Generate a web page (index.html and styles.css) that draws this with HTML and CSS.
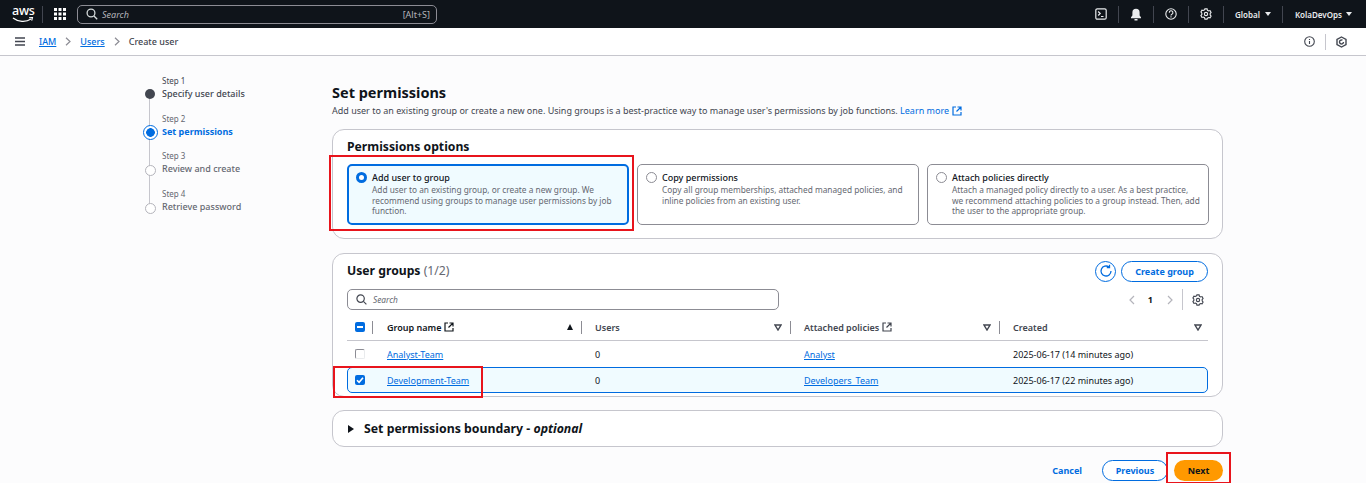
FILE: index.html
```html
<!DOCTYPE html>
<html lang="en">
<head>
    <meta charset="UTF-8">
    <title>Create user - IAM</title>
    <link rel="stylesheet" href="styles.css">
</head>
<body>
    <header class="topbar">
        <div class="logo">
            <span class="logo-text">aws</span>
            <svg class="logo-smile" width="22" height="6" viewBox="0 0 22 6"><path d="M1 1c5 4 13 4.500 18 1" fill="none" stroke="#fff" stroke-width="1.300"/><path d="M17 .8l3.500-.3-.8 3.200" fill="none" stroke="#fff" stroke-width="1.100"/></svg>
        </div>
        <span class="top-sep"></span>
        <svg class="grid-icon" width="12" height="12" viewBox="0 0 12 12" fill="#fff"><rect width="3" height="3"/><rect x="4.500" width="3" height="3"/><rect x="9" width="3" height="3"/><rect y="4.500" width="3" height="3"/><rect x="4.500" y="4.500" width="3" height="3"/><rect x="9" y="4.500" width="3" height="3"/><rect y="9" width="3" height="3"/><rect x="4.500" y="9" width="3" height="3"/><rect x="9" y="9" width="3" height="3"/></svg>
        <div class="top-search">
            <svg width="12" height="12" viewBox="0 0 12 12" fill="none" stroke="#d5dbdb" stroke-width="1.300"><circle cx="5" cy="5" r="3.900"/><path d="M8 8l3.200 3.200"/></svg>
            <span class="top-search-text">Search</span>
            <span class="top-search-key">[Alt+S]</span>
        </div>
        <div class="top-actions">
            <svg class="top-icon" width="12" height="12" viewBox="0 0 12 12" fill="none" stroke="#e9ebed" stroke-width="1.200"><rect x=".8" y=".8" width="10.400" height="10.400" rx="1.500"/><path d="M3.200 3.500l2 2-2 2M6 8.500h2.500"/></svg>
            <span class="top-sep"></span>
            <svg class="top-icon" width="12" height="13" viewBox="0 0 12 13" fill="#e9ebed"><path d="M6 .8a3.600 3.600 0 0 0-3.600 3.600v3L1 9.200v1h10v-1L9.600 7.400v-3A3.600 3.600 0 0 0 6 .8z"/><rect x="4.500" y="11" width="3" height="1.500"/></svg>
            <span class="top-sep"></span>
            <svg class="top-icon" width="12" height="12" viewBox="0 0 12 12" fill="none" stroke="#e9ebed" stroke-width="1.100"><circle cx="6" cy="6" r="5.200"/><path d="M4.300 4.700a1.800 1.800 0 1 1 2.600 1.500c-.6.300-.9.700-.9 1.300M6 8.300v1.100"/></svg>
            <span class="top-sep"></span>
            <svg class="top-icon" width="12" height="12" viewBox="0 0 13 13" fill="none" stroke="#e9ebed" stroke-width="1.200"><path d="M5.300 1h2.400l.4 1.500 1.300.7 1.500-.4 1.100 2-1 1.200v1.500l1 1.200-1.100 2-1.500-.4-1.300.7L7.700 12H5.300l-.4-1.500-1.300-.7-1.500.4-1.100-2 1-1.200V5.500l-1-1.200 1.100-2 1.500.4 1.300-.7z"/><circle cx="6.500" cy="6.500" r="1.800"/></svg>
            <span class="top-sep"></span>
            <span class="top-menu top-menu-region"><span>Global</span> <i class="caret"></i></span>
            <span class="top-sep"></span>
            <span class="top-menu"><span>KolaDevOps</span> <i class="caret"></i></span>
        </div>
    </header>

    <nav class="crumbs">
        <svg class="menu-icon" width="10" height="9" viewBox="0 0 10 9" fill="none" stroke="#424650" stroke-width="1.300"><path d="M0 1h10M0 4.500h10M0 8h10"/></svg>
        <a class="crumb-link" href="#">IAM</a>
        <svg class="crumb-arrow" width="6" height="9" viewBox="0 0 6 9" fill="none" stroke="#8c8c94" stroke-width="1.200"><path d="M1 .8l4 3.700-4 3.700"/></svg>
        <a class="crumb-link" href="#">Users</a>
        <svg class="crumb-arrow" width="6" height="9" viewBox="0 0 6 9" fill="none" stroke="#8c8c94" stroke-width="1.200"><path d="M1 .8l4 3.700-4 3.700"/></svg>
        <span class="crumb-current">Create user</span>
        <div class="crumb-tools">
            <svg width="11" height="11" viewBox="0 0 11 11" fill="none" stroke="#424650" stroke-width="1.100"><circle cx="5.500" cy="5.500" r="4.800"/><path d="M5.500 5v3M5.500 3v1"/></svg>
            <span class="crumb-sep"></span>
            <svg width="11" height="12" viewBox="0 0 11 12" fill="none" stroke="#424650" stroke-width="1.400"><path d="M5.500 1l4.500 2.500v5L5.500 11 1 8.500v-5z"/><path d="M7.500 6A2 2 0 1 1 6.500 4.200"/></svg>
        </div>
    </nav>

    <div class="page">
        <ol class="steps">
            <li class="step step-done">
                <span class="step-num">Step 1</span>
                <span class="step-title">Specify user details</span>
            </li>
            <li class="step step-active">
                <span class="step-num">Step 2</span>
                <span class="step-title">Set permissions</span>
            </li>
            <li class="step">
                <span class="step-num">Step 3</span>
                <span class="step-title">Review and create</span>
            </li>
            <li class="step step-last">
                <span class="step-num">Step 4</span>
                <span class="step-title">Retrieve password</span>
            </li>
        </ol>

        <main class="content">
            <h1>Set permissions</h1>
            <p class="lead">Add user to an existing group or create a new one. Using groups is a best-practice way to manage user's permissions by job functions. <a class="learn" href="#">Learn more</a>
                <svg class="ext-blue" width="10" height="10" viewBox="0 0 10 10" fill="none" stroke="#006ce0" stroke-width="1.200"><path d="M4 1H1v8h8V6M5.500 1H9v3.500M9 1L4.500 5.500"/></svg>
            </p>

            <section class="panel options-panel">
                <h2>Permissions options</h2>
                <div class="tiles">
                    <div class="tile tile-on">
                        <span class="radio radio-on"></span>
                        <div>
                            <div class="tile-title">Add user to group</div>
                            <div class="tile-text">Add user to an existing group, or create a new group. We recommend using groups to manage user permissions by job function.</div>
                        </div>
                        <span class="mark mark-tile"></span>
                    </div>
                    <div class="tile">
                        <span class="radio"></span>
                        <div>
                            <div class="tile-title">Copy permissions</div>
                            <div class="tile-text">Copy all group memberships, attached managed policies, and inline policies from an existing user.</div>
                        </div>
                    </div>
                    <div class="tile">
                        <span class="radio"></span>
                        <div>
                            <div class="tile-title">Attach policies directly</div>
                            <div class="tile-text">Attach a managed policy directly to a user. As a best practice, we recommend attaching policies to a group instead. Then, add the user to the appropriate group.</div>
                        </div>
                    </div>
                </div>
            </section>

            <section class="panel groups-panel">
                <div class="groups-head">
                    <h2>User groups <span class="count">(1/2)</span></h2>
                    <button class="round-btn">
                        <svg width="14" height="14" viewBox="0 0 14 14" fill="none" stroke="#006ce0" stroke-width="1.300"><path d="M12 7a5 5 0 1 1-2-4"/><path d="M10.500 .8v2.700H7.800"/></svg>
                    </button>
                    <button class="outline-btn">Create group</button>
                </div>
                <div class="tools">
                    <div class="search">
                        <svg width="11" height="11" viewBox="0 0 11 11" fill="none" stroke="#424650" stroke-width="1.200"><circle cx="4.600" cy="4.600" r="3.700"/><path d="M7.400 7.400l3 3"/></svg>
                        <span>Search</span>
                    </div>
                    <div class="pager">
                        <svg width="6" height="10" viewBox="0 0 6 10" fill="none" stroke="#b4b4bb" stroke-width="1.200"><path d="M5 1L1 5l4 4"/></svg>
                        <span class="page-num">1</span>
                        <svg width="6" height="10" viewBox="0 0 6 10" fill="none" stroke="#b4b4bb" stroke-width="1.200"><path d="M1 1l4 4-4 4"/></svg>
                        <span class="pager-sep"></span>
                        <svg width="12" height="12" viewBox="0 0 13 13" fill="none" stroke="#424650" stroke-width="1.200"><path d="M5.300 1h2.400l.4 1.500 1.300.7 1.500-.4 1.100 2-1 1.200v1.500l1 1.200-1.100 2-1.500-.4-1.300.7L7.700 12H5.300l-.4-1.500-1.300-.7-1.500.4-1.100-2 1-1.200V5.500l-1-1.200 1.100-2 1.500.4 1.300-.7z"/><circle cx="6.500" cy="6.500" r="1.800"/></svg>
                    </div>
                </div>
                <div class="row row-head">
                    <div class="cell cell-check"><span class="check check-on check-dash"></span></div>
                    <div class="cell th th-dark">Group name
                        <svg class="ext" width="10" height="10" viewBox="0 0 10 10" fill="none" stroke="#0f141a" stroke-width="1.200"><path d="M4 1H1v8h8V6M5.500 1H9v3.500M9 1L4.500 5.500"/></svg>
                        <i class="sort-up"></i>
                    </div>
                    <div class="cell th">Users
                        <svg class="sort-down" width="8" height="7" viewBox="0 0 8 7" fill="none" stroke="#424650" stroke-width="1.400"><path d="M1 1h6L4 6z"/></svg>
                    </div>
                    <div class="cell th">Attached policies
                        <svg class="ext" width="10" height="10" viewBox="0 0 10 10" fill="none" stroke="#424650" stroke-width="1.200"><path d="M4 1H1v8h8V6M5.500 1H9v3.500M9 1L4.500 5.500"/></svg>
                        <svg class="sort-down" width="8" height="7" viewBox="0 0 8 7" fill="none" stroke="#424650" stroke-width="1.400"><path d="M1 1h6L4 6z"/></svg>
                    </div>
                    <div class="cell th th-last">Created
                        <svg class="sort-down" width="8" height="7" viewBox="0 0 8 7" fill="none" stroke="#424650" stroke-width="1.400"><path d="M1 1h6L4 6z"/></svg>
                    </div>
                </div>
                <div class="row">
                    <div class="cell cell-check"><span class="check"></span></div>
                    <div class="cell"><a href="#">Analyst-Team</a></div>
                    <div class="cell">0</div>
                    <div class="cell"><a href="#">Analyst</a></div>
                    <div class="cell">2025-06-17 (14 minutes ago)</div>
                </div>
                <div class="row row-on">
                    <div class="cell cell-check">
                        <span class="check check-on">
                            <svg width="10" height="10" viewBox="0 0 10 10" fill="none" stroke="#fff" stroke-width="1.600"><path d="M2 5.200l2.100 2.100L8 2.800"/></svg>
                        </span>
                    </div>
                    <div class="cell"><a href="#">Development-Team</a></div>
                    <div class="cell">0</div>
                    <div class="cell"><a href="#">Developers_Team</a></div>
                    <div class="cell">2025-06-17 (22 minutes ago)</div>
                    <span class="mark mark-row"></span>
                </div>
            </section>

            <section class="panel boundary-panel">
                <i class="expand"></i>
                <h2>Set permissions boundary - <em>optional</em></h2>
            </section>

            <div class="actions">
                <a class="cancel" href="#">Cancel</a>
                <button class="outline-btn prev-btn">Previous</button>
                <button class="next-btn">Next<span class="mark mark-next"></span></button>
            </div>
        </main>
    </div>
</body>
</html>
```

FILE: styles.css
```css
* { margin: 0; padding: 0; box-sizing: border-box; }
html, body { height: 483px; overflow: hidden; }
body { font-family: "Noto Sans", Arial, sans-serif; font-size: 9px; line-height: 13px; color: #0f141a; background-color: #fcfcfd; }
a { color: #006ce0; }
button { font-family: inherit; cursor: pointer; }
h1, h2 { font-weight: 700; }

/* top bar */
.topbar { height: 28px; background-color: #0f141a; display: flex; align-items: center; padding-left: 12px; color: #fff; }
.logo { width: 21px; height: 18px; position: relative; }
.logo-text { display: block; font-size: 12.500px; line-height: 12px; font-weight: 500; text-align: center; letter-spacing: -0.2px; }
.logo-smile { position: absolute; left: 0; top: 12px; }
.top-sep { width: 1px; height: 17px; background-color: #424650; }
.topbar > .top-sep { margin-left: 9px; }
.grid-icon { margin-left: 11px; }
.top-search { width: 360px; height: 19px; margin-left: 11px; border: 1px solid #8c8c94; border-radius: 5px; display: flex; align-items: center; padding: 0 6px 0 8px; }
.top-search-text { font-style: italic; color: #b4b4bb; margin-left: 4px; font-size: 9px; }
.top-search-key { margin-left: auto; color: #b4b4bb; font-size: 9px; }
.top-actions { margin-left: auto; display: flex; align-items: center; padding-right: 14px; }
.top-icon { margin: 0 11px; }
.top-menu { font-size: 8px; font-weight: 600; color: #e9ebed; padding: 0 0 0 12px; white-space: nowrap; display: flex; align-items: center; gap: 4px; }
.top-menu-region { padding: 0 11px 0 11px; gap: 5px; }
.caret { width: 0; height: 0; border-left: 3px solid transparent; border-right: 3px solid transparent; border-top: 4px solid #e9ebed; }

/* breadcrumbs */
.crumbs { height: 28px; background-color: #fff; border-bottom: 1px solid #c6c6cd; display: flex; align-items: center; padding-left: 15px; }
.menu-icon { margin-right: 14px; }
.crumb-link { font-weight: 500; }
.crumb-arrow { margin: 0 9px; }
.crumb-current { color: #424650; font-weight: 500; }
.crumb-tools { margin-left: auto; padding-right: 19px; display: flex; align-items: center; gap: 10px; }
.crumb-sep { width: 1px; height: 16px; background-color: #c6c6cd; }

/* page layout */
.page { display: flex; padding-left: 145px; }

/* wizard steps */
.steps { list-style: none; width: 187px; padding-top: 18px; }
.step { position: relative; height: 37.500px; padding-left: 17px; color: #656871; }
.step-num { display: block; font-size: 8px; line-height: 13px; }
.step-title { display: block; font-weight: 500; line-height: 13px; }
.step::before { content: ""; position: absolute; left: 0; top: 16px; width: 9px; height: 9px; border-radius: 50%; border: 1px solid #b4b4bb; background-color: #fff; z-index: 1; }
.step::after { content: ""; position: absolute; left: 4px; top: 20px; width: 1px; height: 37px; background-color: #c6c6cd; }
.step-last::after { display: none; }
.step-done { color: #424650; }
.step-done::before { left: 0; top: 15px; width: 10px; height: 10px; border: 0; background-color: #424650; }
.step-active .step-title { color: #006ce0; font-weight: 700; }
.step-active::before { left: -2px; top: 13px; width: 13px; height: 13px; border: 1px solid #006ce0; background: radial-gradient(circle, #006ce0 0 4px, #fff 4.600px); }

/* main column */
.content { width: 891px; padding-top: 26px; }
h1 { font-size: 14.500px; line-height: 20px; }
.lead { color: #424650; margin-top: 2px; line-height: 14px; }
.learn { text-decoration: none; }
.ext-blue { vertical-align: -2px; margin-left: 1px; }

.panel { background-color: #fff; border: 1px solid #c6c6cd; border-radius: 12px; }
.panel h2 { font-size: 12.200px; line-height: 16px; }

.options-panel { height: 110px; margin-top: 11px; padding: 9px 14px; }
.tiles { display: grid; grid-template-columns: repeat(3, 282px); gap: 8px; margin-top: 9px; }
.tile { position: relative; height: 61px; border: 1px solid #8c8c94; border-radius: 5px; display: flex; gap: 5px; padding: 6px 8px; background-color: #fff; }
.tile-on { border: 2px solid #006ce0; background-color: #f0fbff; padding: 5px 7px; }
.tile-title { font-weight: 500; line-height: 13px; }
.tile-text { font-size: 8.300px; line-height: 10.500px; color: #656871; margin-top: 1px; }
.radio { flex: none; width: 11px; height: 11px; margin-top: 1px; border-radius: 50%; border: 1px solid #8c8c94; background-color: #fff; }
.radio-on { border: 3.500px solid #006ce0; }

.groups-panel { height: 144px; margin-top: 14px; padding: 6px 14px 0; }
.groups-head { display: flex; align-items: center; height: 22px; }
.groups-head h2 { margin-right: auto; }
.count { font-weight: 400; color: #656871; }
.round-btn { width: 21px; height: 21px; border-radius: 50%; border: 1px solid #006ce0; background-color: #fff; display: flex; align-items: center; justify-content: center; margin-right: 5px; }
.outline-btn { height: 21px; border: 1px solid #006ce0; border-radius: 11px; background-color: #fff; color: #006ce0; font-size: 9px; font-weight: 700; width: 87px; }
.tools { display: flex; align-items: center; margin-top: 7px; }
.search { width: 432px; height: 21px; border: 1px solid #8c8c94; border-radius: 5px; display: flex; align-items: center; gap: 6px; padding-left: 8px; font-size: 8.300px; font-style: italic; color: #656871; background-color: #fff; }
.pager { margin-left: auto; display: flex; align-items: center; padding-right: 4px; }
.page-num { font-weight: 700; margin: 0 14px 0 13px; }
.pager-sep { width: 1px; height: 21px; background-color: #c6c6cd; margin: 0 9px; }

.row { position: relative; display: grid; grid-template-columns: 40px 208px 209px 209px 1fr; align-items: center; height: 26px; }
.row-head { height: 31px; border-bottom: 1px solid #c6c6cd; }
.row-on { border: 1px solid #006ce0; border-radius: 5px; background-color: #f0fbff; grid-template-columns: 39px 208px 209px 209px 1fr; }
.cell { white-space: nowrap; display: flex; align-items: center; }
.cell-check { padding-left: 8px; }
.row-on .cell-check { padding-left: 7px; }
.row-head .cell { position: relative; height: 100%; padding-top: 4px; color: #424650; font-weight: 600; }
.row-head .th-dark { color: #0f141a; }
.row-head .cell + .cell::before { content: ""; position: absolute; left: -14px; top: 11px; width: 1px; height: 13px; background-color: #8c8c94; }
.row-head .cell:nth-child(2)::before { left: -15px; }
.ext { margin-left: 3px; }
.check { width: 10px; height: 10px; border: 1px solid #8c8c94; border-right-color: #e9ebed; border-bottom-color: #e9ebed; border-radius: 2px; background-color: #fff; display: block; position: relative; }
.check-on { border: 0; background-color: #006ce0; }
.check svg { display: block; }
.check-dash::after { content: ""; position: absolute; left: 2px; right: 2px; top: 4px; height: 2px; background-color: #fff; }
.sort-up, .sort-down { position: absolute; right: 22px; top: 14px; }
.sort-up { width: 0; height: 0; border-left: 3.500px solid transparent; border-right: 3.500px solid transparent; border-bottom: 6px solid #0f141a; }
.th-last .sort-down { right: 6px; }

.boundary-panel { height: 37px; margin-top: 13px; display: flex; align-items: center; padding-left: 15px; gap: 10px; }
.panel.boundary-panel h2 { font-size: 12.300px; }
.expand { width: 0; height: 0; border-top: 4px solid transparent; border-bottom: 4px solid transparent; border-left: 6px solid #0f141a; }

.actions { display: flex; justify-content: flex-end; align-items: center; margin-top: 13px; }
.cancel { font-weight: 700; text-decoration: none; margin-right: 20px; }
.prev-btn { width: 66px; margin-right: 6px; }
.next-btn { position: relative; width: 49px; height: 21px; border: 0; border-radius: 11px; background-color: #ff9900; color: #0f141a; font-size: 9px; font-weight: 700; }

/* red annotation boxes */
.mark { position: absolute; border: 2px solid #e8141c; pointer-events: none; }
.mark-tile { left: -20px; top: -11px; width: 305px; height: 76px; }
.mark-row { left: -15px; top: -2px; width: 150px; height: 32px; }
.mark-next { left: -8px; top: -8px; width: 65px; height: 32px; }
```
